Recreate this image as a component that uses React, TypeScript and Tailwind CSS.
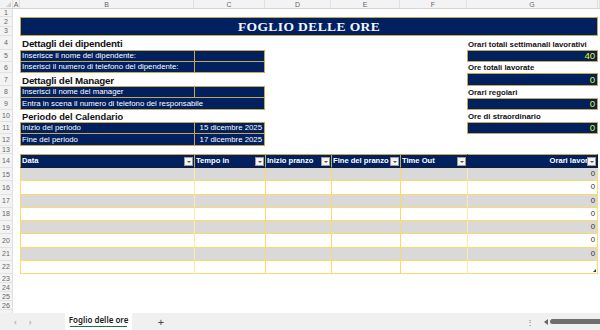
import React from "react";

const COLS = "grid grid-cols-[13px_7px_174px_71px_66px_69px_67px_131px_1fr]";
const FONT = { fontFamily: '"Liberation Sans", Arial, sans-serif' };

const RowNum = ({ n }: { n: React.ReactNode }) => (
  <div className="flex items-center justify-center border-r border-b border-[#e1e1e1] bg-[#f3f3f3] text-[7px] leading-none text-[#666]">
    {n}
  </div>
);

const Filter = () => (
  <div className="absolute right-px bottom-px flex h-[9px] w-[9px] items-end justify-center border border-[#9a9a9a] bg-[#f4f4f4] pb-[2px]">
    <div className="h-0 w-0 border-x-[2px] border-t-[2px] border-x-transparent border-t-[#555]" />
  </div>
);

const ValueBox = ({ v }: { v: string }) => (
  <div className="flex items-center justify-end border border-[#c9a84c] bg-[#002060] pr-[2px] text-[9.5px] leading-none text-[#f2f200]">
    {v}
  </div>
);

const Label = ({ t }: { t: string }) => (
  <div className="flex items-end whitespace-nowrap pl-[1px] pb-[1px] text-[7.8px] font-bold leading-none text-[#111]">
    {t}
  </div>
);

const tableCols = ["Data", "Tempo in", "Inizio pranzo", "Fine del pranzo", "Time Out"];

export default function App() {
  const rows15 = [15, 16, 17, 18, 19, 20, 21, 22];
  return (
    <div className="flex h-[330px] w-[600px] flex-col overflow-hidden bg-white" style={FONT}>
      {/* column headers */}
      <div className={`${COLS} h-[9px] border-b border-[#d4d4d4] bg-[#f3f3f3] text-[7px] leading-none text-[#666]`}>
        <div className="relative border-r border-[#e1e1e1]">
          <div className="absolute right-[1px] bottom-[1px] h-0 w-0 border-l-[5px] border-t-[5px] border-l-transparent border-t-transparent border-b-0 border-r-[5px] border-r-[#cfcfcf]" />
        </div>
        {["A", "B", "C", "D", "E", "F", "G", ""].map((c, i) => (
          <div key={i} className="flex items-center justify-center border-r border-[#e1e1e1]">
            {c}
          </div>
        ))}
      </div>

      {/* row 1 */}
      <div className={`${COLS} h-[8px]`}>
        <RowNum n="1" />
      </div>

      {/* rows 2-3 title */}
      <div className={`${COLS} h-[19px]`}>
        <div className="flex flex-col border-r border-[#e1e1e1] bg-[#f3f3f3] text-[7px] leading-none text-[#666]">
          <div className="flex flex-1 items-center justify-center border-b border-[#e1e1e1]">2</div>
          <div className="flex flex-1 items-center justify-center border-b border-[#e1e1e1]">3</div>
        </div>
        <div />
        <div className="col-span-6 flex items-center justify-center border border-[#c9a84c] bg-[#002060]">
          <span
            className="pt-[1px] text-[13.5px] font-bold leading-none tracking-[0.4px] text-[#f4f6fb]"
            style={{ fontFamily: '"Liberation Serif", "DejaVu Serif", serif' }}
          >
            FOGLIO DELLE ORE
          </span>
        </div>
      </div>

      {/* row 4 */}
      <div className={`${COLS} h-[14px]`}>
        <RowNum n="4" />
        <div />
        <div className="col-span-2 flex items-end whitespace-nowrap pl-[2px] pb-[1px] text-[9.8px] font-bold leading-none tracking-[-0.2px] text-[#111]">
          Dettagli dei dipendenti
        </div>
        <div />
        <div />
        <div />
        <Label t="Orari totali settimanali lavorativi" />
      </div>

      {/* row 5 */}
      <div className={`${COLS} h-[12px]`}>
        <RowNum n="5" />
        <div />
        <div className="flex items-center border border-r-0 border-[#c9a84c] bg-[#002060] pl-[1px] text-[7.8px] leading-none text-white">
          Inserisce il nome del dipendente:
        </div>
        <div className="border border-[#c9a84c] bg-[#002060]" />
        <div />
        <div />
        <div />
        <ValueBox v="40" />
      </div>

      {/* row 6 */}
      <div className={`${COLS} h-[11px]`}>
        <RowNum n="6" />
        <div />
        <div className="flex items-center whitespace-nowrap border-b border-l border-[#c9a84c] bg-[#002060] pl-[1px] text-[7.8px] leading-none text-white">
          Inserisci il numero di telefono del dipendente:
        </div>
        <div className="border-x border-b border-[#c9a84c] bg-[#002060]" />
        <div />
        <div />
        <div />
        <Label t="Ore totali lavorate" />
      </div>

      {/* row 7 */}
      <div className={`${COLS} h-[13px]`}>
        <RowNum n="7" />
        <div />
        <div className="col-span-2 flex items-end whitespace-nowrap pl-[2px] text-[9.8px] font-bold leading-none tracking-[-0.2px] text-[#111]">
          Dettagli del Manager
        </div>
        <div />
        <div />
        <div />
        <ValueBox v="0" />
      </div>

      {/* row 8 */}
      <div className={`${COLS} h-[12px]`}>
        <RowNum n="8" />
        <div />
        <div className="flex items-center border border-r-0 border-[#c9a84c] bg-[#002060] pl-[1px] text-[7.8px] leading-none text-white">
          Inserisci il nome del manager
        </div>
        <div className="border border-[#c9a84c] bg-[#002060]" />
        <div />
        <div />
        <div />
        <Label t="Orari regolari" />
      </div>

      {/* row 9 */}
      <div className={`${COLS} h-[12px]`}>
        <RowNum n="9" />
        <div />
        <div className="col-span-2 flex items-center whitespace-nowrap border-x border-b border-[#c9a84c] bg-[#002060] pl-[1px] text-[7.8px] leading-none text-white">
          Entra in scena il numero di telefono del responsabile
        </div>
        <div />
        <div />
        <div />
        <ValueBox v="0" />
      </div>

      {/* row 10 */}
      <div className={`${COLS} h-[12px]`}>
        <RowNum n="10" />
        <div />
        <div className="col-span-2 flex items-end whitespace-nowrap pl-[2px] text-[9.3px] font-bold leading-none text-[#111]">
          Periodo del Calendario
        </div>
        <div />
        <div />
        <div />
        <Label t="Ore di straordinario" />
      </div>

      {/* row 11 */}
      <div className={`${COLS} h-[12px]`}>
        <RowNum n="11" />
        <div />
        <div className="flex items-center border border-r-0 border-[#c9a84c] bg-[#002060] pl-[1px] text-[7.8px] leading-none text-white">
          Inizio del periodo
        </div>
        <div className="flex items-center justify-end whitespace-nowrap border border-[#c9a84c] bg-[#002060] pr-[2px] text-[7.8px] leading-none text-white">
          15 dicembre 2025
        </div>
        <div />
        <div />
        <div />
        <ValueBox v="0" />
      </div>

      {/* row 12 */}
      <div className={`${COLS} h-[12px]`}>
        <RowNum n="12" />
        <div />
        <div className="flex items-center border-b border-l border-[#c9a84c] bg-[#002060] pl-[1px] text-[7.8px] leading-none text-white">
          Fine del periodo
        </div>
        <div className="flex items-center justify-end whitespace-nowrap border-x border-b border-[#c9a84c] bg-[#002060] pr-[2px] text-[7.8px] leading-none text-white">
          17 dicembre 2025
        </div>
      </div>

      {/* row 13 */}
      <div className={`${COLS} h-[8px]`}>
        <RowNum n="13" />
      </div>

      {/* row 14 table header */}
      <div className={`${COLS} h-[14px]`}>
        <RowNum n="14" />
        <div />
        {tableCols.map((c, i) => (
          <div
            key={c}
            className={`relative flex items-center border-t border-b border-[#c9a84c] border-b-[#1a1a2e] bg-[#002060] pl-[1px] text-[7.6px] font-bold leading-none text-white ${
              i === 0 ? "border-l" : "border-l border-l-[#c9a84c]"
            }`}
          >
            <span className="whitespace-nowrap">{c}</span>
            <Filter />
          </div>
        ))}
        <div className="relative flex items-center justify-end overflow-hidden border border-[#1a1a2e] border-t-[#c9a84c] bg-[#002060] pr-[9px] text-[7.6px] font-bold leading-none text-white">
          <span className="whitespace-nowrap">Orari lavor</span>
          <Filter />
        </div>
      </div>

      {/* rows 15-22 */}
      {rows15.map((n, idx) => {
        const gray = idx % 2 === 0;
        const last = n === 22;
        return (
          <div key={n} className={`${COLS} h-[13.25px]`}>
            <RowNum n={n} />
            <div />
            {[0, 1, 2, 3, 4, 5].map((c) => (
              <div
                key={c}
                className={`relative flex items-center justify-end border-l border-b border-[#ffd966] pr-[2px] text-[7.8px] leading-none text-[#333] ${
                  gray ? "bg-[#d9d9d9]" : "bg-white"
                } ${c === 5 ? "border-r" : ""} ${c === 1 || c === 5 ? "border-l-[#ffe9a8]" : ""}`}
              >
                {c === 5 && !last ? "0" : ""}
                {c === 5 && last ? (
                  <div className="absolute right-[1px] bottom-[1px] h-0 w-0 border-l-[3px] border-b-[3px] border-l-transparent border-b-[#1f3864]" />
                ) : null}
              </div>
            ))}
          </div>
        );
      })}

      {/* rows 23-27 */}
      {[23, 24, 25, 26].map((n) => (
        <div key={n} className={`${COLS} h-[9px]`}>
          <RowNum n={n} />
        </div>
      ))}
      <div className={`${COLS} h-[3px]`}>
        <div className="border-r border-[#e1e1e1] bg-[#f3f3f3]" />
      </div>

      {/* sheet tabs */}
      <div
        className="flex h-[17px] items-stretch bg-[#f0f0f0] text-[#a0a0a0]"
        style={{ fontFamily: '"Noto Sans", "Liberation Sans", sans-serif' }}
      >
        <div className="flex w-[65px] items-center gap-[12px] pl-[14px] text-[9px]">
          <span>‹</span>
          <span>›</span>
        </div>
        <div className="flex w-[67px] flex-col items-center justify-center bg-white">
          <span className="text-[8px] font-semibold leading-none text-[#222]">Foglio delle ore</span>
          <div className="mt-[2px] h-[1.5px] w-[57px] bg-[#1e7145]" />
        </div>
        <div className="flex w-[58px] items-center justify-center text-[11px] leading-none text-[#444]">+</div>
        <div className="flex-1" />
        <div className="flex items-center pr-[10px] text-[8px] leading-none text-[#666]">⋮</div>
        <div className="flex items-center gap-[2px] pr-0">
          <div className="h-0 w-0 border-y-[3px] border-r-[4px] border-y-transparent border-r-[#666]" />
          <div className="h-[5px] w-[50px] rounded-l-full bg-[#6e6e6e]" />
        </div>
      </div>
    </div>
  );
}
